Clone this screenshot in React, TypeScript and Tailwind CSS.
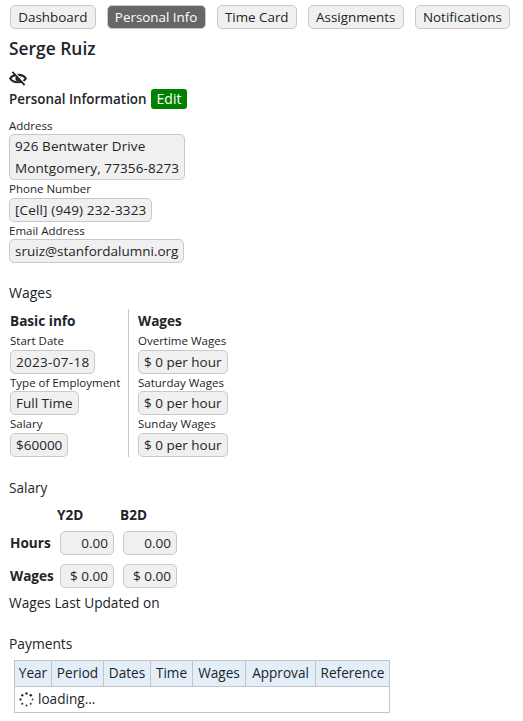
const tabs = ["Dashboard", "Personal Info", "Time Card", "Assignments", "Notifications"];
const columns = [
  { name: "Year", width: "w-[37px]" },
  { name: "Period", width: "w-[52px]" },
  { name: "Dates", width: "w-[47px]" },
  { name: "Time", width: "w-[42px]" },
  { name: "Wages", width: "w-[53px]" },
  { name: "Approval", width: "w-[70px]" },
  { name: "Reference", width: "w-[74px]" },
];

function Field({ children, className = "" }: { children: React.ReactNode; className?: string }) {
  return (
    <div className={`w-fit rounded-[5px] border border-[#c9c9c9] bg-[#f0f0f0] px-[5px] text-[13.5px] leading-[22px] ${className}`}>
      {children}
    </div>
  );
}

function Label({ children }: { children: React.ReactNode }) {
  return <div className="text-[11.5px] leading-[17.5px]">{children}</div>;
}

function EyeOff() {
  return (
    <svg width="18" height="15" viewBox="0 0 18 15" className="mt-[10px]" fill="none">
      <path d="M1.2 7.5C4 2.6 14 2.6 16.8 7.5C14 12.4 4 12.4 1.2 7.5Z" stroke="#212529" strokeWidth="2.1" />
      <circle cx="9" cy="7.5" r="2.6" fill="#212529" />
      <path d="M4.6 0.2L16.6 13.2" stroke="#ffffff" strokeWidth="1.4" />
      <path d="M3.4 0.8L15.6 14.2" stroke="#212529" strokeWidth="1.8" />
    </svg>
  );
}

function Spinner() {
  const dots = [0, 45, 90, 135, 180, 225, 270, 315];
  return (
    <svg width="15" height="15" viewBox="0 0 15 15" className="mr-[4px]">
      {dots.map((deg, i) => (
        <circle
          key={deg}
          cx={7.5 + 6 * Math.cos((deg * Math.PI) / 180)}
          cy={7.5 + 6 * Math.sin((deg * Math.PI) / 180)}
          r={0.9 + i * 0.06}
          fill="#333"
        />
      ))}
    </svg>
  );
}

export default function App() {
  return (
    <div className="h-[721px] overflow-hidden bg-white pl-[9px] pt-[5px] text-[#212529] [font-family:'Open_Sans',sans-serif]">
      <nav className="flex gap-[11px] pl-px">
        {tabs.map((tab) => (
          <button
            key={tab}
            className={
              tab === "Personal Info"
                ? "h-[24px] rounded-[5px] border border-[#c9c9c9] bg-[#666666] px-[7.25px] text-[13.4px] text-white"
                : "h-[24px] rounded-[5px] border border-[#c9c9c9] bg-[#f0f0f0] px-[7.25px] text-[13.4px]"
            }
          >
            {tab}
          </button>
        ))}
      </nav>

      <h1 className="mt-[6px] text-[17.4px] font-semibold leading-[26px]">Serge Ruiz</h1>
      <EyeOff />

      <div className="mt-[3px] flex h-[20px] items-center gap-[4px]">
        <span className="text-[13.4px] font-semibold">Personal Information</span>
        <button className="h-[20px] rounded-[3px] bg-[#008000] px-[6px] text-[14px] leading-[20px] text-white">Edit</button>
      </div>

      <div className="mt-[7.5px]">
        <Label>Address</Label>
        <Field className="tracking-[0.1px]">
          926 Bentwater Drive
          <br />
          Montgomery, 77356-8273
        </Field>
        <Label>Phone Number</Label>
        <Field className="tracking-[0.15px]">[Cell] (949) 232-3323</Field>
        <Label>Email Address</Label>
        <Field>sruiz@stanfordalumni.org</Field>
      </div>

      <h2 className="mt-[21px] text-[14px] font-medium leading-[18px]">Wages</h2>

      <div className="mt-[7px] flex pl-px">
        <div className="w-[119px] border-r border-[#c9c9c9]">
          <div className="text-[13.6px] font-bold leading-[23px]">Basic info</div>
          <Label>Start Date</Label>
          <Field className="tracking-[0.3px]">2023-07-18</Field>
          <Label>Type of Employment</Label>
          <Field>Full Time</Field>
          <Label>Salary</Label>
          <Field>$60000</Field>
        </div>
        <div className="pl-[9px]">
          <div className="text-[13.6px] font-bold leading-[23px]">Wages</div>
          <Label>Overtime Wages</Label>
          <Field>$ 0 per hour</Field>
          <Label>Saturday Wages</Label>
          <Field>$ 0 per hour</Field>
          <Label>Sunday Wages</Label>
          <Field>$ 0 per hour</Field>
        </div>
      </div>

      <h2 className="mt-[22.5px] text-[13.6px] leading-[18px]">Salary</h2>

      <div className="mt-[8px] grid grid-cols-[50px_63px_54px] items-center pl-px text-[13.6px]">
        <span />
        <span className="-ml-[3px] font-bold leading-[20px]">Y2D</span>
        <span className="-ml-[3px] font-bold leading-[20px]">B2D</span>
        <span className="mt-[6px] font-bold">Hours</span>
        <Field className="mt-[6px] !w-[54px] text-right">0.00</Field>
        <Field className="mt-[6px] !w-[54px] text-right">0.00</Field>
        <span className="mt-[9px] font-bold">Wages</span>
        <Field className="mt-[9px] !w-[54px] text-right">$ 0.00</Field>
        <Field className="mt-[9px] !w-[54px] text-right">$ 0.00</Field>
      </div>

      <p className="mt-[5px] text-[13.7px] leading-[20px]">Wages Last Updated on</p>

      <h2 className="mt-[22px] text-[13.8px] leading-[18px]">Payments</h2>

      <table className="ml-[5px] mt-[7px] table-fixed border-collapse text-[13.6px]">
        <thead>
          <tr>
            {columns.map((col) => (
              <th key={col.name} className={`h-[26px] border border-[#c4c4c4] bg-[#e3eef9] p-0 text-center font-medium ${col.width}`}>
                {col.name}
              </th>
            ))}
          </tr>
        </thead>
        <tbody>
          <tr>
            <td colSpan={7} className="h-[26px] border border-[#c4c4c4] px-[4px]">
              <span className="flex items-center">
                <Spinner />
                loading...
              </span>
            </td>
          </tr>
        </tbody>
      </table>
    </div>
  );
}
